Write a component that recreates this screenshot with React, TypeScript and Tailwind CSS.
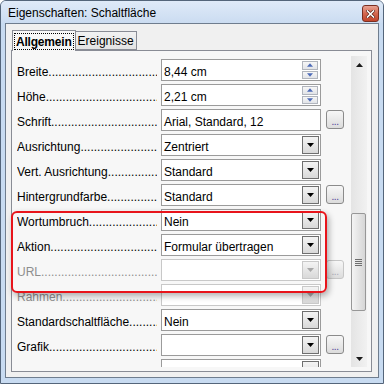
import type { ReactNode } from 'react';

type Kind = 'spin' | 'text' | 'drop';

interface Row { label: string; value: string; kind: Kind; more?: boolean; disabled?: boolean; }

const rows: Row[] = [
  { label: 'Breite', value: '8,44 cm', kind: 'spin' },
  { label: 'Höhe', value: '2,21 cm', kind: 'spin' },
  { label: 'Schrift', value: 'Arial, Standard, 12', kind: 'text', more: true },
  { label: 'Ausrichtung', value: 'Zentriert', kind: 'drop' },
  { label: 'Vert. Ausrichtung', value: 'Standard', kind: 'drop' },
  { label: 'Hintergrundfarbe', value: 'Standard', kind: 'drop', more: true },
  { label: 'Wortumbruch', value: 'Nein', kind: 'drop' },
  { label: 'Aktion', value: 'Formular übertragen', kind: 'drop' },
  { label: 'URL', value: '', kind: 'drop', more: true, disabled: true },
  { label: 'Rahmen', value: '', kind: 'drop', disabled: true },
  { label: 'Standardschaltfläche', value: 'Nein', kind: 'drop' },
  { label: 'Grafik', value: '', kind: 'drop', more: true },
  { label: 'Grafikausrichtung', value: 'Links oben', kind: 'drop' },
];

const Tri = ({ up, color, w = 7 }: { up?: boolean; color: string; w?: number }) => (
  <svg width={w} height={4} viewBox="0 0 7 4" className="block">
    <path d={up ? 'M0 4 L3.5 0 L7 4 Z' : 'M0 0 L7 0 L3.5 4 Z'} fill={color} />
  </svg>
);

const DropBtn = ({ disabled }: { disabled?: boolean }) => (
  <div className={`w-[17px] my-[1px] mr-[1px] flex items-center justify-center border bg-gradient-to-b from-[#f4f4f4] to-[#d9d9d9] ${disabled ? 'border-[#c9c9c9]' : 'border-[#6f6f6f]'}`}>
    <Tri color={disabled ? '#a8a8a8' : '#000'} />
  </div>
);

const Spin = () => (
  <div className="w-[16px] my-[1px] mr-[2px] flex flex-col gap-[1px]">
    {[true, false].map(up => (
      <div key={String(up)} className="flex-1 flex items-center justify-center border border-[#b1b5bd] bg-gradient-to-b from-[#f7f7f7] to-[#e2e4e8]">
        <Tri up={up} color="#4d6bb8" w={6} />
      </div>
    ))}
  </div>
);

const More = ({ disabled }: { disabled?: boolean }) => (
  <div className={`ml-[5px] mt-[1px] w-[18px] h-[19px] rounded-[3px] border bg-gradient-to-b from-[#f7f7f7] to-[#dcdcdc] flex items-end justify-center pb-[3px] ${disabled ? 'border-[#c6c6c6]' : 'border-[#8b8b8b]'}`}>
    <span className={`text-[10px] leading-[6px] tracking-[-0.5px] ${disabled ? 'text-[#a9a9b8]' : 'text-[#4a3a9a]'}`}>...</span>
  </div>
);

const Field = ({ row }: { row: Row }) => (
  <div className="flex h-[25px] shrink-0 items-start">
    <div className={`w-[144px] h-[22px] pt-[4px] pr-[4px] flex items-center overflow-hidden whitespace-nowrap ${row.disabled ? 'text-[#8d8d8d]' : 'text-black'}`}>
      <span>{row.label}</span>
      <span className="flex-1 min-w-0 overflow-hidden">{'.'.repeat(60)}</span>
    </div>
    <div className={`w-[160px] h-[22px] flex border bg-white ${row.disabled ? 'border-[#c8c8c8]' : 'border-[#9b9b9b]'}`}>
      <span className="flex-1 pl-[2px] pt-[3px] whitespace-nowrap overflow-hidden">{row.value}</span>
      {row.kind === 'spin' && <Spin />}
      {row.kind === 'drop' && <DropBtn disabled={row.disabled} />}
    </div>
    {row.more && <More disabled={row.disabled} />}
  </div>
);

const Tab = ({ active, children }: { active?: boolean; children: ReactNode }) =>
  active ? (
    <div className="relative z-10 h-[21px] -mb-[1px] ml-[1px] px-[1px] pt-[2px] border border-b-0 border-[#898c95] bg-[#f7f7f7]">
      <div className="h-[17px] px-[1px] border border-dotted border-black flex items-center font-bold tracking-[-0.2px]">{children}</div>
    </div>
  ) : (
    <div className="h-[19px] mt-[1px] px-[2px] border border-l-0 border-[#898c95] bg-gradient-to-b from-[#f2f2f2] to-[#e3e3e3] flex items-center">{children}</div>
  );

const CloseBtn = () => (
  <div className="w-[17px] h-[17px] rounded-[3px] border border-[#7a2f22] bg-gradient-to-b from-[#e8a394] via-[#d3674f] to-[#c2452b] flex items-center justify-center">
    <svg width="9" height="8" viewBox="0 0 9 8">
      <path d="M1.5 1 L7.5 7 M7.5 1 L1.5 7" stroke="#5a2218" strokeWidth="3" strokeLinecap="square" />
      <path d="M1.5 1 L7.5 7 M7.5 1 L1.5 7" stroke="#fff" strokeWidth="1.6" strokeLinecap="square" />
    </svg>
  </div>
);

const Scrollbar = () => (
  <div className="w-[16px] shrink-0 mr-[4px] flex flex-col bg-gradient-to-r from-[#e4e4e4] to-[#f1f1f1]">
    <div className="h-[17px] flex items-center justify-center"><Tri up color="#1a1a1a" /></div>
    <div className="h-[140px]" />
    <div className="h-[98px] mr-[1px] rounded-[2px] border border-[#979797] bg-gradient-to-r from-[#f4f4f4] to-[#d6d6d6] flex flex-col items-center justify-center gap-[1px]">
      {[0, 1, 2, 3].map(i => <div key={i} className="w-[7px] h-px bg-[#6e6e6e]" />)}
    </div>
    <div className="flex-1" />
    <div className="h-[17px] flex items-center justify-center"><Tri color="#1a1a1a" /></div>
  </div>
);

export default function App() {
  return (
    <div className="relative w-[384px] h-[384px] overflow-hidden flex flex-col border border-[#54657a] rounded-t-[6px] bg-[#c8dbf1] font-['Liberation_Sans',Arial,sans-serif] text-[12px] text-black">
      <div className="h-[22px] shrink-0 flex items-start pl-[7px] pr-[4px] bg-gradient-to-b from-[#dfeaf8] to-[#cbdcf1]">
        <span className="flex-1 pt-[5px] leading-[14px]">Eigenschaften: Schaltfläche</span>
        <div className="pt-[4px]"><CloseBtn /></div>
      </div>
      <div className="flex-1 min-h-0 ml-[4px] mr-[4px] mb-[5px] flex flex-col pl-[5px] pr-[6px] pt-[6px] pb-[5px] border border-[#6f7d8e] bg-[#f0f0f0]">
        <div className="flex items-start shrink-0">
          <Tab active>Allgemein</Tab>
          <Tab>Ereignisse</Tab>
        </div>
        <div className="flex-1 min-h-0 flex pl-[5px] pt-[5px] pb-[4px] border border-[#898c95] bg-[#f7f7f7]">
          <div className="flex-1 min-w-0 min-h-0 overflow-hidden pt-[3px]">
            {rows.map(r => <Field key={r.label} row={r} />)}
          </div>
          <Scrollbar />
        </div>
      </div>
      <div className="absolute left-[10px] top-[210px] w-[316px] h-[82px] rounded-[6px] border-2 border-[#e8141b] shadow-[2px_3px_6px_rgba(0,0,0,0.3)]" />
    </div>
  );
}
